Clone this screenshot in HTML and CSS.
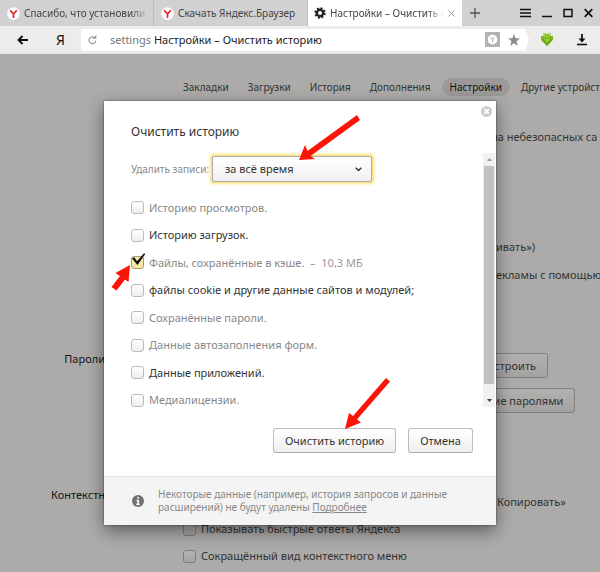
FILE: index.html
```html
<!DOCTYPE html>
<html lang="ru">
<head>
<meta charset="utf-8">
<title>Настройки – Очистить историю</title>
<link rel="stylesheet" href="styles.css">
</head>
<body>
<header class="chrome">
  <div class="tabbar">
    <nav class="tabs">
      <a class="tab" href="#t1"><svg class="ylogo" width="13" height="13" viewBox="0 0 13 13"><circle cx="6.5" cy="6.5" r="6.3" fill="#fff"/><path d="M3.2 3.2 6.5 7V11M9.8 3.2 6.5 7" stroke="#e41f25" stroke-width="1.7" fill="none"/></svg><span class="tab-title fade">Спасибо, что установили Я</span></a>
      <a class="tab" href="#t2"><svg class="ylogo" width="13" height="13" viewBox="0 0 13 13"><circle cx="6.5" cy="6.5" r="6.3" fill="#fff"/><path d="M3.2 3.2 6.5 7V11M9.8 3.2 6.5 7" stroke="#e41f25" stroke-width="1.7" fill="none"/></svg><span class="tab-title">Скачать Яндекс.Браузер</span></a>
      <a class="tab active" href="#t3"><svg width="12" height="12" viewBox="0 0 12 12"><circle cx="6" cy="6" r="3.2" fill="none" stroke="#222" stroke-width="2.4"/><circle cx="6" cy="6" r="4.7" fill="none" stroke="#222" stroke-width="2" stroke-dasharray="1.9 1.79"/></svg><span class="tab-title fade">Настройки – Очистить и</span><svg width="7" height="7" viewBox="0 0 7 7"><path d="M.5.5l6 6M6.5.5l-6 6" stroke="#999" /></svg></a>
    </nav>
    <button class="icon-btn new-tab" aria-label="Новая вкладка"><svg width="10" height="10" viewBox="0 0 10 10"><path d="M5 0v10M0 5h10" stroke="#555" stroke-width="1.3"/></svg></button>
    <div class="window-controls">
      <button class="icon-btn" aria-label="Меню"><svg width="11" height="10" viewBox="0 0 11 10"><path d="M0 1.5h11M0 5h11M0 8.5h11" stroke="#111" stroke-width="1.7"/></svg></button>
      <button class="icon-btn" aria-label="Свернуть"><svg width="10" height="10" viewBox="0 0 10 10"><path d="M0 8.5h10" stroke="#111" stroke-width="1.5"/></svg></button>
      <button class="icon-btn" aria-label="Развернуть"><svg width="10" height="10" viewBox="0 0 10 10"><path d="M1 1.5h8v7H1z" fill="none" stroke="#111" stroke-width="1.5"/></svg></button>
      <button class="icon-btn" aria-label="Закрыть"><svg width="9" height="10" viewBox="0 0 9 10"><path d="M.7 1.2l7.6 7.6M8.3 1.2L.7 8.8" stroke="#111" stroke-width="1.7"/></svg></button>
    </div>
  </div>
  <div class="toolbar">
    <button class="icon-btn back" aria-label="Назад"><svg width="12" height="10" viewBox="0 0 12 10"><path d="M11 5H2M5.500 1 1.500 5l4 4" fill="none" stroke="#111" stroke-width="1.9"/></svg></button>
    <a class="ya" href="#ya">Я</a>
    <div class="address">
      <svg width="9" height="10" viewBox="0 0 9 10"><path d="M7.8 5.500A3.400 3.400 0 1 1 6.200 2.400" fill="none" stroke="#999" stroke-width="1.2"/><path d="M4.500 3.700h3.800V0z" fill="#999"/></svg>
      <p class="url"><span class="scheme">settings</span> Настройки – Очистить историю</p>
      <svg width="15" height="15" viewBox="0 0 15 15"><path fill="#b3b3b3" d="M0 0h15v15H0z"/><circle cx="7.5" cy="7.5" r="4.8" fill="#fff"/><path d="M5.500 5l2 2.800v2.500M9.500 5l-2 2.800" fill="none" stroke="#aaa"/></svg>
      <svg width="12" height="12" viewBox="0 0 12 12"><path fill="#8a8a8a" d="M6 0l1.600 4.200 4.400.2-3.500 2.800L9.800 12 6 9.300 2.200 12l1.300-4.800L0 4.400l4.400-.2z"/></svg>
    </div>
    <button class="icon-btn" aria-label="Скачать с сайта"><svg width="12" height="13" viewBox="0 0 12 13"><path fill="#7db822" d="M2.500 0h2v1h3V0h2v3H12v3.500L6 13 0 6.500V3h2.500z"/><path d="M3.500 0v4M6 1v4M8.500 0v4" stroke="#a9d94c"/><path d="M0 6.500h12L6 13z" fill="#6aa516"/><path d="M3 6h6L6 10z" fill="#9ccf3c"/></svg></button>
    <button class="icon-btn downloads" aria-label="Загрузки"><svg width="10" height="12" viewBox="0 0 10 12"><path d="M5 0v6" stroke="#111" stroke-width="1.8"/><path d="M1.500 4.500h7L5 8.500z" fill="#111"/><path d="M0 10.500h10" stroke="#111" stroke-width="1.6"/></svg></button>
  </div>
</header>

<main class="page">
  <nav class="sections">
    <a href="#bookmarks">Закладки</a>
    <a href="#downloads">Загрузки</a>
    <a href="#history">История</a>
    <a href="#addons">Дополнения</a>
    <a class="current" href="#settings">Настройки</a>
    <a href="#devices">Другие устройст</a>
  </nav>
  <section class="group privacy">
    <p class="line line-warning">на небезопасных са</p>
    <p class="line line-hint">ивать»)</p>
    <p class="line line-hint">екламы с помощью</p>
  </section>
  <section class="group passwords">
    <h2>Пароли</h2>
    <div class="group-buttons">
      <button class="btn dim narrow">Настроить</button>
      <button class="btn dim">Управление паролями</button>
    </div>
  </section>
  <section class="group context">
    <h2>Контекстн</h2>
    <div class="options">
      <p class="line line-copy">Копировать»</p>
      <label class="check"><input type="checkbox"><span>Показывать быстрые ответы Яндекса</span></label>
      <label class="check"><input type="checkbox"><span>Сокращённый вид контекстного меню</span></label>
    </div>
  </section>

  <div class="overlay">
    <form class="dialog" role="dialog" aria-labelledby="dialog-title">
      <button class="icon-btn close" type="button" aria-label="Закрыть"><svg width="11" height="11" viewBox="0 0 11 11"><circle cx="5.5" cy="5.5" r="5.5" fill="#ccc"/><path d="M3.200 3.200l4.600 4.600M7.800 3.200L3.200 7.800" stroke="#fff" stroke-width="1.7"/></svg></button>
      <h1 id="dialog-title">Очистить историю</h1>
      <div class="scroll">
        <div class="fields">
          <div class="period">
            <label for="period">Удалить записи:</label>
            <div class="select">
              <select id="period"><option>за всё время</option></select>
              <svg width="7" height="5" viewBox="0 0 7 5"><path d="M.7.7l2.800 2.800L6.300.7" fill="none" stroke="#333" stroke-width="1.5"/></svg>
            </div>
          </div>
          <div class="list">
            <label class="check muted"><input type="checkbox"><span>Историю просмотров.</span></label>
            <label class="check"><input type="checkbox"><span>Историю загрузок.</span></label>
            <label class="check muted"><input type="checkbox" checked><span>Файлы, сохранённые в кэше. <span class="size">&nbsp;–&nbsp; 10,3 МБ</span></span><svg class="tick" width="15" height="13" viewBox="0 0 15 13"><path d="M1 5.500l2.300-1.200L6 8.200 13 .3l1.300.8L6.500 12z" fill="#111"/></svg></label>
            <label class="check"><input type="checkbox"><span>файлы cookie и другие данные сайтов и модулей;</span></label>
            <label class="check muted"><input type="checkbox"><span>Сохранённые пароли.</span></label>
            <label class="check muted"><input type="checkbox"><span>Данные автозаполнения форм.</span></label>
            <label class="check"><input type="checkbox"><span>Данные приложений.</span></label>
            <label class="check muted"><input type="checkbox"><span>Медиалицензии.</span></label>
          </div>
        </div>
        <div class="scrollbar">
          <svg width="5" height="3" viewBox="0 0 5 3"><path d="M0 3h5L2.500 0z" fill="#999"/></svg>
          <div class="thumb"></div>
          <svg width="5" height="3" viewBox="0 0 5 3"><path d="M0 0h5L2.500 3z" fill="#444"/></svg>
        </div>
      </div>
      <div class="actions">
        <button class="btn" type="button">Очистить историю</button>
        <button class="btn" type="button">Отмена</button>
      </div>
      <footer class="note">
        <svg width="12" height="12" viewBox="0 0 12 12"><circle cx="6" cy="6" r="6" fill="#737373"/><path d="M5.200 2h1.700v1.600H5.200zM4.500 4.800h2.400v4h.8V10H4.300V8.800h1V6h-.8z" fill="#fff"/></svg>
        <p>Некоторые данные (например, история запросов и данные расширений) не будут удалены <a href="#more">Подробнее</a></p>
      </footer>
    </form>
  </div>
</main>

<svg class="pointers" width="600" height="572" viewBox="0 0 600 572">
  <g fill="#fb1408">
    <path d="M299 160l6-15 2.500 6L357 115l3 5-49.500 36 4.500 3z"/>
    <path d="M345 429l4-16 4 3 33-38 4 3.500-33 38 4 3z"/>
    <path d="M130 265l-1.500 17-3.500-2.500-8.500 11-5-3.500 8.500-11-4.500-3z"/>
  </g>
</svg>
</body>
</html>
```

FILE: styles.css
```css
* { box-sizing: border-box; }

body {
  margin: 0;
  min-height: 100vh;
  display: flex;
  flex-direction: column;
  position: relative;
  overflow: hidden;
  background: #acaba9;
  color: #333;
  font: 11px/16px "Noto Sans", "Open Sans", sans-serif;
}

h1, h2, p { margin: 0; font-weight: 400; }
a { color: inherit; text-decoration: none; }
svg { display: block; flex: none; }
button, select { font: inherit; color: inherit; }

.icon-btn {
  display: flex;
  padding: 0;
  border: 0;
  background: none;
}

/* Browser frame */
.tabbar {
  display: flex;
  align-items: center;
  height: 26px;
  background: #d1d1d1;
  font-size: 10px;
}
.tabs { display: flex; width: 77%; height: 100%; }
.tab {
  flex: 1 1 0;
  min-width: 0;
  display: flex;
  align-items: center;
  gap: 4px;
  padding: 0 5px 0 7px;
  border-right: 1px solid #bdbdbd;
  color: #444;
}
.tab.active { background: #fff; border: 0; padding: 0 7px 0 6px; }
.tab-title { flex: 1; overflow: hidden; white-space: nowrap; }
.fade {
  -webkit-mask-image: linear-gradient(to left, transparent, #000 16px);
  mask-image: linear-gradient(to left, transparent, #000 16px);
}
.new-tab { margin-left: 8px; }
.window-controls { display: flex; gap: 11px; margin: 0 7px 0 auto; }

.toolbar {
  display: flex;
  align-items: center;
  gap: 12px;
  height: 28px;
  padding: 0 13px 0 17px;
  background: #ececec;
  border-bottom: 1px solid #e2e2e2;
}
.ya { margin-left: 11px; padding: 0 4px; font-size: 14px; color: #111; }
.address {
  flex: 1;
  display: flex;
  align-items: center;
  gap: 8px;
  height: 22px;
  padding: 0 9px 0 7px;
  background: #fff;
  clip-path: polygon(0 0, calc(100% - 4px) 0, 100% 50%, calc(100% - 4px) 100%, 0 100%);
}
.url { flex: 1; padding-left: 5px; color: #222; white-space: nowrap; }
.scheme { color: #777; }
.downloads { margin-left: 12px; }

/* Settings page */
.page { flex: 1; position: relative; overflow: hidden; }
.sections {
  display: flex;
  gap: 3px;
  padding: 24px 0 0 175px;
  font-size: 10px;
  line-height: 18px;
  white-space: nowrap;
}
.sections a { padding: 0 8px; }
.sections .current { background: #9b9a99; border-radius: 9px; color: #111; }

.group { display: flex; }
.group h2 {
  flex: none;
  width: 108px;
  padding-right: 3px;
  font-size: 11px;
  text-align: right;
  color: #161616;
}
.line { line-height: 16px; white-space: nowrap; }
.privacy { flex-direction: column; padding-top: 33px; gap: 12px; }
.line-warning { padding: 0 0 82px 491px; }
.line-hint { padding-left: 496px; }
.passwords { padding-top: 68px; }
.group-buttons { display: grid; gap: 10px; justify-items: start; padding: 2px 0 0 322px; }
.context { padding-top: 74px; }
.options { display: grid; gap: 11px; padding: 7px 0 0 75px; }
.line-copy { padding-left: 314px; }

.check {
  position: relative;
  display: flex;
  align-items: center;
  gap: 5px;
  line-height: 16px;
  white-space: nowrap;
}
.check input {
  appearance: none;
  width: 13px;
  height: 13px;
  margin: 0;
  border: 1px solid #bbb;
  border-radius: 3px;
  background: linear-gradient(#fff, #eee);
}
.check input:checked { border-color: #a89c74; background: #f8e9a8; }
.muted { color: #888; }
.size { color: #999; }
.tick { position: absolute; left: 0; top: 4px; }
.options .check input { border-color: #7d7d7d; background: linear-gradient(#b4b4b3, #a5a4a3); }

.btn {
  height: 25px;
  padding: 0 11px;
  border: 1px solid #bbb;
  border-bottom-color: #aaa;
  border-radius: 3px;
  background: linear-gradient(#fff, #f0f0f0);
  line-height: 16px;
  white-space: nowrap;
}
.btn.dim { border-color: #7f7f7e; background: linear-gradient(#b2b1b0, #a3a2a1); }
.dim.narrow { margin-left: 38px; }

/* Dialog */
.overlay {
  position: absolute;
  inset: 0;
  display: flex;
  align-items: center;
  justify-content: center;
}
.dialog {
  position: relative;
  width: 100%;
  max-width: 392px;
  background: #fff;
  box-shadow: 0 0 2px rgba(0, 0, 0, .5), 0 6px 16px rgba(0, 0, 0, .45);
}
.close { position: absolute; top: 5px; right: 4px; }
.dialog h1 { padding: 21px 27px 0; font-size: 12px; line-height: 20px; }
.scroll { display: flex; justify-content: space-between; margin-top: 11px; }
.fields { flex: 1; padding: 3px 0 0 27px; }
.period { display: flex; align-items: center; gap: 6px; }
.period label { width: 75px; font-size: 10px; color: #888; white-space: nowrap; }
.select { display: flex; align-items: center; }
.select select {
  appearance: none;
  width: 160px;
  height: 26px;
  padding: 0 12px;
  border: 1px solid #aaa;
  border-radius: 2px;
  background: linear-gradient(#fff, #f0f0f0);
  box-shadow: 0 0 0 1px #ffe383, 0 0 3px 2px #ffe383;
}
.select svg { margin-left: -17px; margin-right: 10px; }
.list { display: grid; grid-template-rows: repeat(8, 1fr); height: 220px; margin-top: 12px; }
.scrollbar {
  display: flex;
  flex-direction: column;
  align-items: center;
  gap: 5px;
  width: 12px;
  padding: 5px 0;
  margin: 0 1px 7px 0;
  background: #f1f1f1;
}
.thumb { flex: 1; width: 10px; margin-bottom: 10px; background: #c1c1c1; }
.actions { display: flex; justify-content: flex-end; gap: 12px; padding: 14px 23px 23px; }
.note {
  display: flex;
  align-items: center;
  gap: 14px;
  padding: 11px 40px 11px 28px;
  border-top: 1px solid #e4e4e4;
  background: #f4f4f4;
  color: #888;
  font-size: 10px;
  line-height: 13px;
}
.note a { text-decoration: underline; }

.pointers { position: absolute; top: 0; left: 0; pointer-events: none; }
```
